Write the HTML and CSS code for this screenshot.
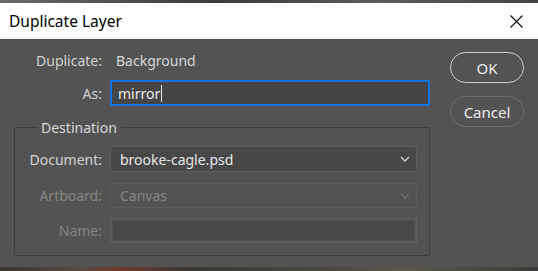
FILE: index.html
```html
<!DOCTYPE html>
<html lang="en">
<head>
    <meta charset="UTF-8">
    <meta name="viewport" content="width=device-width, initial-scale=1.0">
    <title>Duplicate Layer</title>
    <link rel="stylesheet" href="styles.css">
</head>
<body>
    <div class="photo-top"></div>
    <div class="titlebar">
        <span class="title">Duplicate Layer</span>
        <svg class="close" width="13" height="13" viewBox="0 0 13 13">
            <path d="M0.5 0.5 L12.5 12.5 M12.5 0.5 L0.5 12.5" stroke="#111" stroke-width="1.2" fill="none"/>
        </svg>
    </div>
    <div class="dialog">
        <div class="main">
            <div class="row">
                <span class="label">Duplicate:</span>
                <span class="value">Background</span>
            </div>
            <div class="row">
                <span class="label">As:</span>
                <div class="input focused">mirror<span class="caret"></span></div>
            </div>
            <fieldset class="destination">
                <legend>Destination</legend>
                <div class="row first">
                    <span class="label">Document:</span>
                    <div class="select">
                        <span>brooke-cagle.psd</span>
                        <svg width="10" height="6" viewBox="0 0 10 6"><path d="M1 1 L5 5 L9 1" stroke="#cfcfcf" stroke-width="1.4" fill="none"/></svg>
                    </div>
                </div>
                <div class="row disabled">
                    <span class="label">Artboard:</span>
                    <div class="select">
                        <span>Canvas</span>
                        <svg width="10" height="6" viewBox="0 0 10 6"><path d="M1 1 L5 5 L9 1" stroke="#6e6e6e" stroke-width="1.4" fill="none"/></svg>
                    </div>
                </div>
                <div class="row disabled">
                    <span class="label">Name:</span>
                    <div class="input blank"></div>
                </div>
            </fieldset>
        </div>
        <div class="buttons">
            <button class="primary">OK</button>
            <button>Cancel</button>
        </div>
    </div>
    <div class="photo-bottom"></div>
</body>
</html>
```

FILE: styles.css
```css
body, html {
    margin: 0;
    padding: 0;
    width: 538px;
    height: 271px;
    overflow: hidden;
    font-family: "Noto Sans", "Open Sans", sans-serif;
    font-size: 14px;
    background-color: #535353;
}
.photo-top {
    height: 3px;
    background: linear-gradient(90deg, #6a6a6a, #3a3a3a 40%, #5c5c5c 70%, #444 100%);
}
.titlebar {
    height: 36px;
    background-color: #fff;
    display: flex;
    align-items: center;
    justify-content: space-between;
    padding: 0 15px 0 9px;
}
.title {
    color: #000;
    font-size: 15.5px;
}
.dialog {
    height: 228px;
    display: flex;
    align-items: flex-start;
    box-sizing: border-box;
    padding-top: 11px;
}
.main {
    width: 430px;
    display: flex;
    flex-direction: column;
    gap: 10px;
}
.row {
    display: grid;
    grid-template-columns: 102px 1fr;
    column-gap: 8px;
    align-items: center;
    min-height: 20px;
}
.label {
    text-align: right;
    color: #d2d2d2;
}
.value {
    color: #d8d8d8;
    padding-left: 6px;
}
.input {
    height: 26px;
    box-sizing: border-box;
    display: flex;
    align-items: center;
    padding-left: 6px;
    color: #ececec;
}
.focused {
    border: 2px solid #1473e6;
    background-color: #454545;
}
.caret {
    display: inline-block;
    width: 1px;
    height: 17px;
    background-color: #e6e6e6;
    margin-left: 1px;
}
.destination {
    margin: 2px 0 0 14px;
    padding: 9px 12px 12px 0;
    border: 1px solid #3f3f3f;
    border-radius: 1px;
    display: flex;
    flex-direction: column;
    gap: 10px;
}
.destination legend {
    margin-left: 22px;
    padding: 0 4px;
    color: #d6d6d6;
    font-size: 14px;
}
.destination .row {
    grid-template-columns: 87px 1fr;
}
.destination .first {
    margin-bottom: 1px;
}
.select {
    height: 26px;
    box-sizing: border-box;
    border: 1px solid #5e5e5e;
    border-radius: 3px;
    background-color: #474747;
    display: flex;
    align-items: center;
    justify-content: space-between;
    padding: 0 6px 0 9px;
    color: #e6e6e6;
}
.disabled .label {
    color: #858585;
}
.disabled .select {
    height: 25px;
    background-color: #535353;
    border-color: #5c5c5c;
    color: #838383;
}
.blank {
    height: 25px;
    border: 1px solid #616161;
    padding: 2px;
    background-color: #484848;
    background-clip: content-box;
}
.buttons {
    margin-left: 20px;
    margin-top: 2px;
    display: flex;
    flex-direction: column;
    gap: 13px;
}
button {
    width: 74px;
    height: 31px;
    border-radius: 16px;
    border: 1.5px solid #6f6f6f;
    background: transparent;
    color: #ececec;
    font-family: "Noto Sans", "Open Sans", sans-serif;
    font-size: 15px;
    padding: 0;
}
button.primary {
    border-color: #cfcfcf;
}
.photo-bottom {
    height: 4px;
    background: linear-gradient(90deg, #3a3430, #5a4a40 15%, #6e3a2c 22%, #3b3733 35%, #4a4640 60%, #5b584a 75%, #3d3b38 100%);
}
```
